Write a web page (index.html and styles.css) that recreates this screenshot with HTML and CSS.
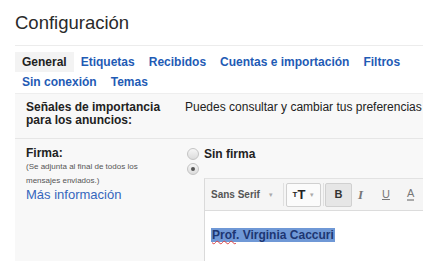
FILE: index.html
```html
<!DOCTYPE html>
<html lang="es">
<head>
  <meta charset="UTF-8">
  <title>Configuración</title>
  <link rel="stylesheet" href="styles.css">
</head>
<body>
  <div class="page">
    <h1 class="titulo">Configuración</h1>

    <!-- Pestañas de configuración -->
    <div class="tabs">
      <div class="tab-row">
        <span class="tab activa">General</span>
        <a class="tab" href="#">Etiquetas</a>
        <a class="tab" href="#">Recibidos</a>
        <a class="tab" href="#">Cuentas e importación</a>
        <a class="tab" href="#">Filtros</a>
      </div>
      <div class="tab-row">
        <a class="tab" href="#">Sin conexión</a>
        <a class="tab" href="#">Temas</a>
      </div>
    </div>

    <div class="panel">
      <div class="fila fila-senales">
        <div class="etiqueta">Señales de importancia para los anuncios:</div>
        <div class="valor">Puedes consultar y cambiar tus preferencias</div>
      </div>

      <div class="fila fila-firma">
        <div class="etiqueta">
          Firma:
          <div class="nota">(Se adjunta al final de todos los mensajes enviados.)</div>
          <a class="enlace" href="#">Más información</a>
        </div>
        <div class="valor">
          <label class="opcion opcion-1"><span class="radio"></span>Sin firma</label>
          <label class="opcion opcion-2"><span class="radio marcado"></span></label>

          <!-- Editor de la firma -->
          <div class="editor">
            <div class="barra">
              <span class="fuente">Sans Serif</span>
              <span class="flecha">&#9662;</span>
              <span class="sep"></span>
              <span class="boton boton-tam"><span class="t-peq">T</span><span class="t-gde">T</span><span class="flecha">&#9662;</span></span>
              <span class="sep"></span>
              <span class="boton boton-b">B</span>
              <span class="icono icono-i">I</span>
              <span class="icono icono-u">U</span>
              <span class="icono icono-a">A</span>
            </div>
            <div class="cuerpo">
              <span class="seleccion"><span class="error">Prof</span>. Virginia Caccuri</span>
            </div>
          </div>
        </div>
      </div>
    </div>
  </div>
</body>
</html>
```

FILE: styles.css
```css
/* Grundlegendes */
body, html {
  margin: 0;
  padding: 0;
  background: #fff;
  font-family: "Liberation Sans", Arial, sans-serif;
  color: #222;
  overflow: hidden;
}

.page {
  width: 408px;
  margin-left: 15px;
}

/* Titel */
.titulo {
  margin: 0;
  padding-top: 12px;
  height: 33px;
  line-height: 21px;
  font-size: 18.5px;
  font-weight: normal;
  color: #2a2a2a;
  border-bottom: 1px solid #ececec;
}

/* Pestañas */
.tabs {
  margin-top: 6px;
  margin-bottom: 1px;
}

.tab-row {
  display: flex;
}

.tab {
  padding: 0 7px;
  line-height: 20px;
  font-size: 12px;
  font-weight: bold;
  color: #1f5bb5;
  text-decoration: none;
}

.tab.activa {
  color: #222;
  background: #f3f3f3;
}

/* Panel principal */
.panel {
  background: #f8f8f8;
  border-top: 1px solid #eeeeee;
  height: 167px;
}

.fila {
  display: flex;
  border-bottom: 1px solid #e6e6e6;
}

.fila-senales {
  padding: 7px 0 11px;
}

.fila-firma {
  padding-top: 7px;
  border-bottom: none;
}

.etiqueta {
  width: 140px;
  margin-right: 19px;
  padding-left: 11px;
  font-size: 12px;
  font-weight: bold;
  line-height: 13px;
  flex-shrink: 0;
}

.fila-firma .etiqueta {
  line-height: 14px;
}

.valor {
  flex: 1;
  font-size: 12px;
  line-height: 13px;
  white-space: nowrap;
  overflow: hidden;
}

.nota {
  font-size: 8px;
  font-weight: normal;
  line-height: 14px;
  color: #555;
}

.enlace {
  display: block;
  font-size: 13px;
  font-weight: normal;
  color: #3566bd;
  text-decoration: none;
}

/* Radio-Buttons */
.opcion {
  display: flex;
  align-items: center;
  font-weight: bold;
  padding-left: 2px;
}

.opcion-1 {
  height: 16px;
}

.opcion-2 {
  height: 14px;
}

.radio {
  width: 10px;
  height: 10px;
  border: 1px solid #c4c4c4;
  border-radius: 50%;
  background: linear-gradient(#f6f6f6, #dcdcdc);
  margin-right: 5px;
  position: relative;
  flex-shrink: 0;
}

.radio.marcado::after {
  content: "";
  position: absolute;
  left: 3px;
  top: 3px;
  width: 4px;
  height: 4px;
  border-radius: 50%;
  background: #555;
}

/* Editor */
.editor {
  margin-left: 19px;
  margin-top: 2px;
  border-left: 1px solid #dadada;
  border-top: 1px solid #e2e2e2;
  background: #fff;
  height: 82px;
}

.barra {
  height: 31px;
  background: #f5f5f5;
  border-bottom: 1px solid #dcdcdc;
  display: flex;
  align-items: center;
  padding-left: 6px;
}

.fuente {
  font-size: 10px;
  font-weight: bold;
  color: #555;
}

.flecha {
  font-size: 7px;
  color: #aaa;
  margin-left: 9px;
}

.sep {
  width: 1px;
  height: 23px;
  background: #e0e0e0;
  margin-left: 10px;
}

.boton {
  height: 22px;
  border: 1px solid #d0d0d0;
  border-radius: 2px;
  display: flex;
  align-items: center;
  justify-content: center;
  margin-left: 2px;
}

.boton-tam {
  width: 33px;
  background: #fbfbfb;
  margin-right: 2px;
}

.boton-tam + .sep {
  margin-left: 0;
}

.boton-tam .flecha {
  margin-left: 5px;
}

.t-peq {
  font-size: 8px;
  font-weight: bold;
  color: #222;
  align-self: flex-end;
  margin-bottom: 5px;
}

.t-gde {
  font-size: 13px;
  font-weight: bold;
  color: #222;
}

.boton-b {
  width: 25px;
  background: #e6e6e6;
  font-size: 11px;
  font-weight: bold;
  color: #333;
  margin-left: 1px;
}

.icono {
  color: #777;
  font-size: 11px;
}

.icono-i {
  font-family: "Liberation Serif", serif;
  font-style: italic;
  font-weight: bold;
  font-size: 13px;
  margin-left: 6px;
}

.icono-u {
  margin-left: 19px;
  text-decoration: underline;
}

.icono-a {
  margin-left: 17px;
  padding-bottom: 1px;
  border-bottom: 2px solid #aaa;
  line-height: 10px;
}

.cuerpo {
  padding: 17px 0 0 6px;
  line-height: 14px;
}

.seleccion {
  background: #6f98d6;
  color: #1d3672;
  font-weight: bold;
  font-size: 12px;
  padding: 0 1px;
}

.error {
  text-decoration: underline wavy #d44;
  text-decoration-thickness: 1px;
}
```
